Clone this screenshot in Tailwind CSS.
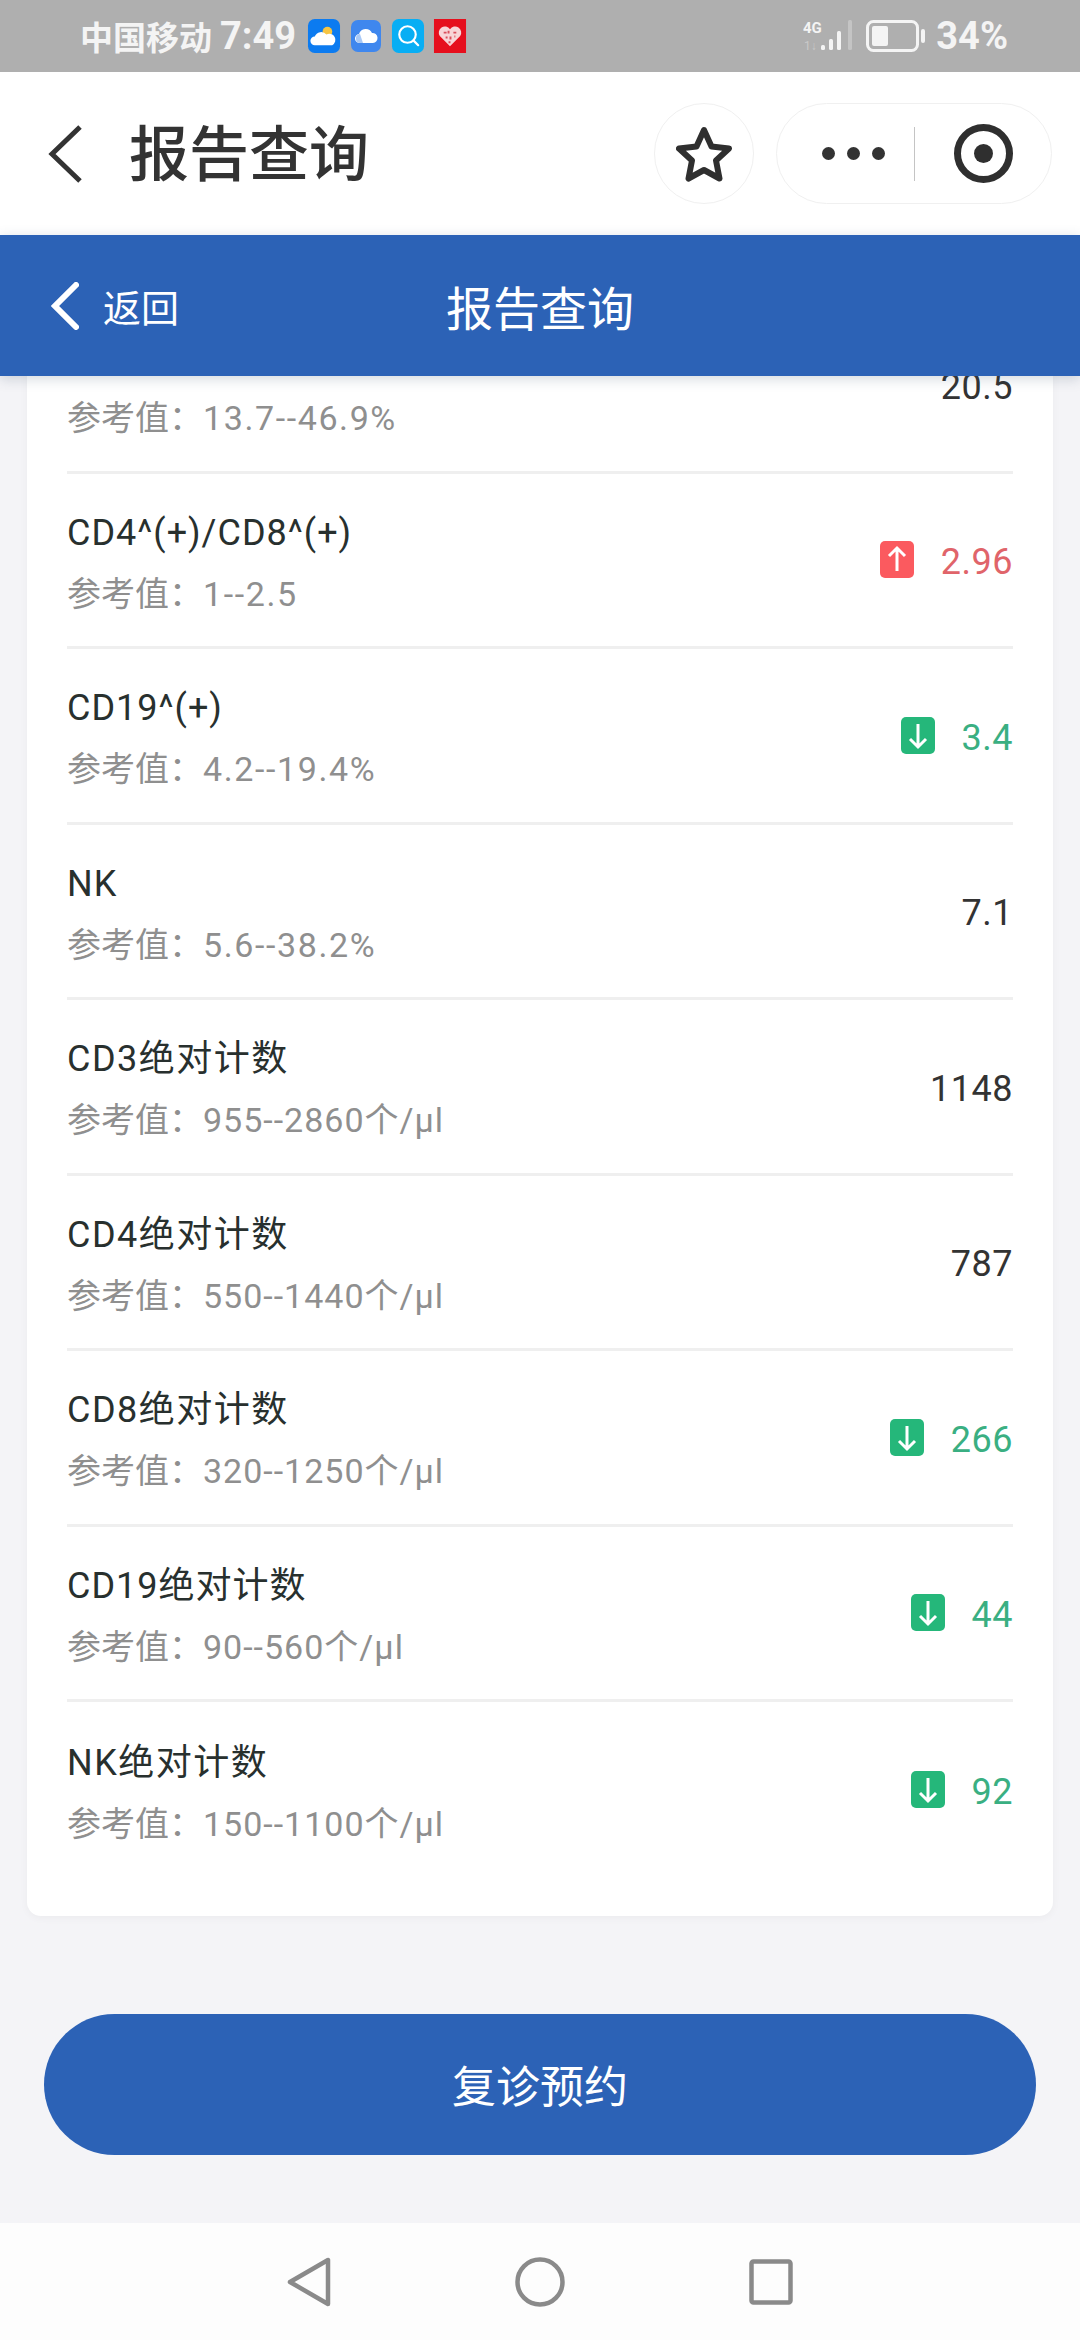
<!DOCTYPE html>
<html lang="zh-CN">
<head>
  <meta charset="UTF-8" />
  <meta name="viewport" content="width=device-width, initial-scale=1" />
  <title>报告查询</title>
  <script src="https://cdn.jsdelivr.net/npm/@tailwindcss/browser@4"></script>
</head>
<body class="w-[1080px] h-[2340px] overflow-hidden flex flex-col bg-[#f4f4f7] font-['Roboto','Noto_Sans_CJK_SC',sans-serif]">

  <!-- Status bar -->
  <div class="h-[72px] shrink-0 bg-[#afafaf] flex items-center justify-between pl-[80px] pr-[72px] text-[#f4f4f4]">
    <div class="flex items-center">
      <span class="text-[33px] font-bold font-['Noto_Sans_CJK_SC',sans-serif] leading-none">中国移动</span>
      <span class="text-[38px] font-bold ml-[8px] leading-none">7:49</span>
      <svg class="ml-[11px]" width="34" height="34" viewBox="0 0 33 35">
        <rect width="33" height="35" rx="7" fill="#0c7bf0" />
        <circle cx="20" cy="13" r="5" fill="#f6c544" />
        <path d="M7 27a4.500 4.500 0 0 1 0-9 7 7 0 0 1 12-2 5.500 5.500 0 0 1 6 11z" fill="#fff" />
      </svg>
      <svg class="ml-[10px]" width="30" height="32" viewBox="0 0 30 32">
        <rect width="30" height="32" rx="7" fill="#3f87ee" />
        <path d="M9 23a4.500 4.500 0 0 1-1-9 7 7 0 0 1 13-1 5 5 0 0 1 1 10z" fill="#fff" />
        <path d="M5 19a4 4 0 0 1 4-5l3 9H9a4 4 0 0 1-4-4z" fill="#a9c9f6" />
      </svg>
      <svg class="ml-[10px]" width="34" height="34" viewBox="0 0 33 35">
        <rect width="33" height="35" rx="7" fill="#08aef4" />
        <circle cx="16" cy="16" r="8.500" fill="none" stroke="#fff" stroke-width="2.200" />
        <path d="M22 22l5 5" stroke="#fff" stroke-width="2.200" stroke-linecap="round" />
      </svg>
      <svg class="ml-[8px]" width="34" height="34" viewBox="0 0 33 35">
        <rect width="33" height="35" fill="#e60f1d" />
        <path d="M16.500 28 6 17.500a6 6 0 0 1 10.500-7 6 6 0 0 1 10.500 7z" fill="#f8d5d8" />
        <path d="M10 14h3M15 12v3M20 14h3M12 19h2M17 18v3M21 18h1M15 24h2" stroke="#d9505c" stroke-width="2" />
      </svg>
    </div>
    <div class="flex items-center">
      <svg width="50" height="34" viewBox="0 0 50 34">
        <text x="0" y="14" font-size="15" font-weight="700" font-family="Roboto" fill="#f4f4f4">4G</text>
        <text x="1" y="31" font-size="12" font-family="Roboto" fill="#c9c9c9">1↓</text>
        <rect x="18" y="26" width="4" height="5" rx="1.500" fill="#f4f4f4" />
        <rect x="26" y="20" width="4" height="11" rx="1.500" fill="#f4f4f4" />
        <rect x="34" y="12" width="4" height="19" rx="1.500" fill="#f4f4f4" />
        <rect x="45" y="1" width="4" height="30" rx="1.500" fill="#c4c4c4" />
      </svg>
      <svg class="ml-[13px]" width="59" height="32" viewBox="0 0 59 32">
        <rect x="1.500" y="1.500" width="50" height="29" rx="6" fill="none" stroke="#f4f4f4" stroke-width="3" />
        <rect x="6" y="6" width="16" height="20" rx="2" fill="#f4f4f4" />
        <rect x="55" y="9" width="4" height="14" rx="2" fill="#f4f4f4" />
      </svg>
      <span class="ml-[11px] text-[38px] font-bold leading-none">34%</span>
    </div>
  </div>

  <!-- Mini program title bar -->
  <div class="h-[163px] shrink-0 bg-white flex items-center pl-[46px] pr-[28px]">
    <svg width="36" height="58" viewBox="0 0 36 58" fill="none" stroke="#333" stroke-width="5">
      <path d="M34 2 6 29l28 27" />
    </svg>
    <span class="ml-[47px] pb-[7px] text-[60px] font-medium text-[#333] leading-none font-['Noto_Sans_CJK_SC',sans-serif]">报告查询</span>
    <div class="ml-auto flex items-center gap-[22px]">
      <div class="w-[100px] h-[101px] rounded-full border border-[#f0f0f0] flex items-center justify-center">
        <svg width="56" height="56" viewBox="0 0 56 56" fill="none" stroke="#2f2f2f" stroke-width="6" stroke-linejoin="round">
          <path d="M28 4l7.500 16.500 17.500 2-13 12 3.500 18L28 44l-15.500 8.500 3.500-18-13-12 17.500-2z" />
        </svg>
      </div>
      <div class="w-[276px] h-[101px] rounded-full border border-[#f0f0f0] flex items-center pl-[45px]">
        <div class="flex gap-[12px]">
          <span class="w-[13px] h-[13px] rounded-full bg-[#333]"></span>
          <span class="w-[13px] h-[13px] rounded-full bg-[#333]"></span>
          <span class="w-[13px] h-[13px] rounded-full bg-[#333]"></span>
        </div>
        <span class="ml-[29px] w-px h-[54px] bg-[#c4c4c4]"></span>
        <div class="ml-[39px] w-[59px] h-[59px] rounded-full border-[7px] border-[#2f2f2f] flex items-center justify-center">
          <span class="w-[19px] h-[19px] rounded-full bg-[#2f2f2f]"></span>
        </div>
      </div>
    </div>
  </div>

  <!-- Page header -->
  <div class="relative z-10 h-[141px] shrink-0 bg-[#2c62b6] text-white grid grid-cols-[1fr_auto_1fr] items-center px-[51px] shadow-[0_3px_12px_rgba(60,80,110,0.22)]">
    <div class="flex items-center">
      <svg width="28" height="48" viewBox="0 0 28 48" fill="none" stroke="#fff" stroke-width="6" stroke-linecap="round">
        <path d="M25 3 4 24l21 21" />
      </svg>
      <span class="ml-[24px] text-[38px] leading-none font-['Noto_Sans_CJK_SC',sans-serif]">返回</span>
    </div>
    <span class="text-[47px] leading-none font-['Noto_Sans_CJK_SC',sans-serif]">报告查询</span>
    <span></span>
  </div>

  <!-- Scrolled content, first row runs under the header -->
  <main class="flex-1 overflow-hidden">
    <div class="-mt-[78px] mx-[27px] bg-white rounded-b-[14px] px-[40px] pb-[38px] shadow-[0_2px_8px_rgba(0,0,0,0.04)]">

      <div class="h-[175.500px] border-b-[3px] border-[#efefef] flex items-center justify-between">
        <div class="flex flex-col gap-[14px] pt-[4px]">
          <span class="h-[50px]"></span>
          <span class="text-[34px] leading-[44px] text-[#8f8f8f]">参考值：<span class="tracking-[1.6px]">13.7--46.9%</span></span>
        </div>
        <span class="pt-[5px] text-[36px] tracking-[0.5px] text-[#333]">20.5</span>
      </div>

      <div class="h-[175.500px] border-b-[3px] border-[#efefef] flex items-center justify-between">
        <div class="flex flex-col gap-[14px] pt-[4px]">
          <span class="text-[36px] tracking-[1px] leading-[50px] text-[#28302e]">CD4^(+)/CD8^(+)</span>
          <span class="text-[34px] leading-[44px] text-[#8f8f8f]">参考值：<span class="tracking-[1.6px]">1--2.5</span></span>
        </div>
        <div class="flex items-center gap-[27px]">
          <svg width="34" height="37" viewBox="0 0 34 37"><rect width="34" height="37" rx="5" fill="#fb5a5f" /><path d="M17 30V8M9 15l8-8 8 8" fill="none" stroke="#fff" stroke-width="3" /></svg>
          <span class="pt-[5px] text-[36px] tracking-[0.5px] text-[#e0646a]">2.96</span>
        </div>
      </div>

      <div class="h-[175.500px] border-b-[3px] border-[#efefef] flex items-center justify-between">
        <div class="flex flex-col gap-[14px] pt-[4px]">
          <span class="text-[36px] tracking-[1px] leading-[50px] text-[#28302e]">CD19^(+)</span>
          <span class="text-[34px] leading-[44px] text-[#8f8f8f]">参考值：<span class="tracking-[1.6px]">4.2--19.4%</span></span>
        </div>
        <div class="flex items-center gap-[27px]">
          <svg width="34" height="37" viewBox="0 0 34 37"><rect width="34" height="37" rx="5" fill="#25b77a" /><path d="M17 7v22M9 22l8 8 8-8" fill="none" stroke="#fff" stroke-width="3" /></svg>
          <span class="pt-[5px] text-[36px] tracking-[0.5px] text-[#3aaf82]">3.4</span>
        </div>
      </div>

      <div class="h-[175.500px] border-b-[3px] border-[#efefef] flex items-center justify-between">
        <div class="flex flex-col gap-[14px] pt-[4px]">
          <span class="text-[36px] tracking-[1px] leading-[50px] text-[#28302e]">NK</span>
          <span class="text-[34px] leading-[44px] text-[#8f8f8f]">参考值：<span class="tracking-[1.6px]">5.6--38.2%</span></span>
        </div>
        <span class="pt-[5px] text-[36px] tracking-[0.5px] text-[#333]">7.1</span>
      </div>

      <div class="h-[175.500px] border-b-[3px] border-[#efefef] flex items-center justify-between">
        <div class="flex flex-col gap-[14px] pt-[4px]">
          <span class="text-[36px] tracking-[1.5px] leading-[50px] text-[#28302e]">CD3绝对计数</span>
          <span class="text-[34px] leading-[44px] text-[#8f8f8f]">参考值：<span class="tracking-[1px]">955--2860个/μl</span></span>
        </div>
        <span class="pt-[5px] text-[36px] tracking-[0.5px] text-[#333]">1148</span>
      </div>

      <div class="h-[175.500px] border-b-[3px] border-[#efefef] flex items-center justify-between">
        <div class="flex flex-col gap-[14px] pt-[4px]">
          <span class="text-[36px] tracking-[1.5px] leading-[50px] text-[#28302e]">CD4绝对计数</span>
          <span class="text-[34px] leading-[44px] text-[#8f8f8f]">参考值：<span class="tracking-[1px]">550--1440个/μl</span></span>
        </div>
        <span class="pt-[5px] text-[36px] tracking-[0.5px] text-[#333]">787</span>
      </div>

      <div class="h-[175.500px] border-b-[3px] border-[#efefef] flex items-center justify-between">
        <div class="flex flex-col gap-[14px] pt-[4px]">
          <span class="text-[36px] tracking-[1.5px] leading-[50px] text-[#28302e]">CD8绝对计数</span>
          <span class="text-[34px] leading-[44px] text-[#8f8f8f]">参考值：<span class="tracking-[1px]">320--1250个/μl</span></span>
        </div>
        <div class="flex items-center gap-[27px]">
          <svg width="34" height="37" viewBox="0 0 34 37"><rect width="34" height="37" rx="5" fill="#25b77a" /><path d="M17 7v22M9 22l8 8 8-8" fill="none" stroke="#fff" stroke-width="3" /></svg>
          <span class="pt-[5px] text-[36px] tracking-[0.5px] text-[#3aaf82]">266</span>
        </div>
      </div>

      <div class="h-[175.500px] border-b-[3px] border-[#efefef] flex items-center justify-between">
        <div class="flex flex-col gap-[14px] pt-[4px]">
          <span class="text-[36px] tracking-[1px] leading-[50px] text-[#28302e]">CD19绝对计数</span>
          <span class="text-[34px] leading-[44px] text-[#8f8f8f]">参考值：<span class="tracking-[1px]">90--560个/μl</span></span>
        </div>
        <div class="flex items-center gap-[27px]">
          <svg width="34" height="37" viewBox="0 0 34 37"><rect width="34" height="37" rx="5" fill="#25b77a" /><path d="M17 7v22M9 22l8 8 8-8" fill="none" stroke="#fff" stroke-width="3" /></svg>
          <span class="pt-[5px] text-[36px] tracking-[0.5px] text-[#3aaf82]">44</span>
        </div>
      </div>

      <div class="h-[175.500px] flex items-center justify-between">
        <div class="flex flex-col gap-[14px] pt-[4px]">
          <span class="text-[36px] tracking-[1.5px] leading-[50px] text-[#28302e]">NK绝对计数</span>
          <span class="text-[34px] leading-[44px] text-[#8f8f8f]">参考值：<span class="tracking-[1px]">150--1100个/μl</span></span>
        </div>
        <div class="flex items-center gap-[27px]">
          <svg width="34" height="37" viewBox="0 0 34 37"><rect width="34" height="37" rx="5" fill="#25b77a" /><path d="M17 7v22M9 22l8 8 8-8" fill="none" stroke="#fff" stroke-width="3" /></svg>
          <span class="pt-[5px] text-[36px] tracking-[0.5px] text-[#3aaf82]">92</span>
        </div>
      </div>
    </div>

    <button class="mt-[98px] mx-[44px] w-[992px] h-[141px] rounded-full bg-[#2c62b6] text-white text-[44px] font-['Noto_Sans_CJK_SC',sans-serif]">复诊预约</button>
  </main>

  <!-- Android nav bar -->
  <div class="h-[117px] shrink-0 bg-[#fdfdfd] flex items-start justify-center pt-[34px] gap-[184px]">
    <svg width="44" height="50" viewBox="0 0 44 50" fill="none" stroke="#8a8a8a" stroke-width="4.500" stroke-linejoin="round">
      <path d="M41 3v44L3 25z" />
    </svg>
    <svg width="50" height="50" viewBox="0 0 50 50" fill="none" stroke="#8a8a8a" stroke-width="4.500">
      <circle cx="25" cy="25" r="22.500" />
    </svg>
    <svg width="44" height="46" viewBox="0 0 44 46" class="mt-[2px]" fill="none" stroke="#8a8a8a" stroke-width="4.500">
      <rect x="2.500" y="2.500" width="39" height="41" rx="2" />
    </svg>
  </div>
</body>
</html>
